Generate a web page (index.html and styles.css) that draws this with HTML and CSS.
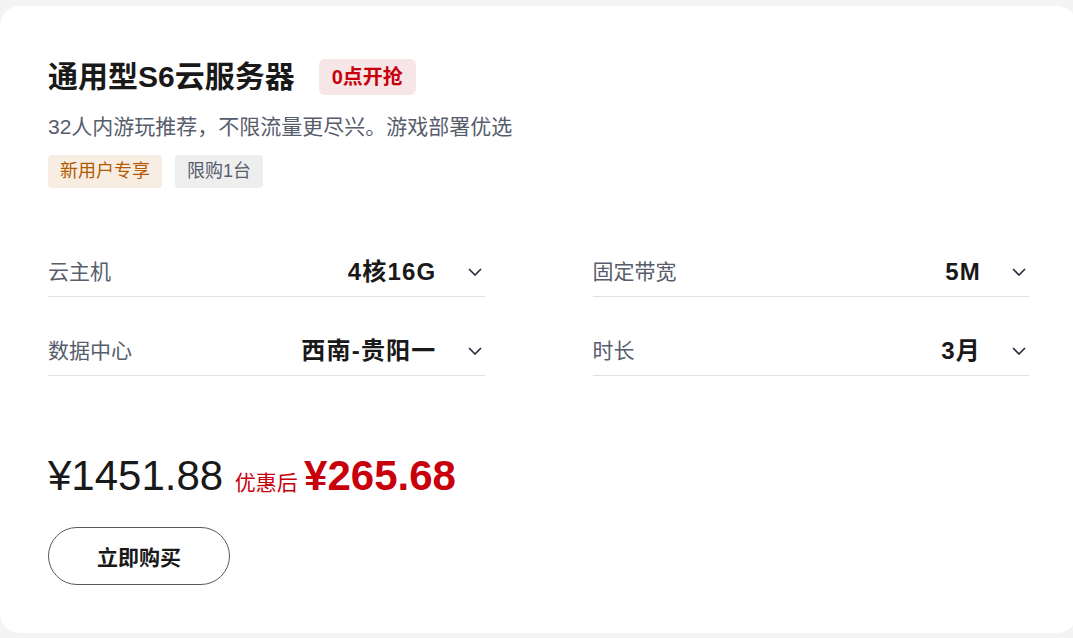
FILE: index.html
```html
<!DOCTYPE html>
<html lang="zh-CN">
<head>
<meta charset="utf-8">
<title>通用型S6云服务器</title>
<link rel="stylesheet" href="styles.css">
</head>
<body>
<div class="card">
  <div class="header">
    <h1 class="title">通用型S6云服务器</h1>
    <span class="badge">0点开抢</span>
  </div>
  <p class="subtitle">32人内游玩推荐，不限流量更尽兴。游戏部署优选</p>
  <div class="tags">
    <span class="tag tag-new">新用户专享</span>
    <span class="tag tag-limit">限购1台</span>
  </div>
  <div class="specs">
    <div class="spec">
      <span class="label">云主机</span>
      <span class="value">4核16G</span>
      <svg class="chev" width="14" height="8" viewBox="0 0 14 8"><path d="M1 1 L7 7 L13 1" fill="none" stroke="#252b3a" stroke-width="1.6"/></svg>
    </div>
    <div class="spec">
      <span class="label">固定带宽</span>
      <span class="value">5M</span>
      <svg class="chev" width="14" height="8" viewBox="0 0 14 8"><path d="M1 1 L7 7 L13 1" fill="none" stroke="#252b3a" stroke-width="1.6"/></svg>
    </div>
    <div class="spec">
      <span class="label">数据中心</span>
      <span class="value">西南-贵阳一</span>
      <svg class="chev" width="14" height="8" viewBox="0 0 14 8"><path d="M1 1 L7 7 L13 1" fill="none" stroke="#252b3a" stroke-width="1.6"/></svg>
    </div>
    <div class="spec">
      <span class="label">时长</span>
      <span class="value">3月</span>
      <svg class="chev" width="14" height="8" viewBox="0 0 14 8"><path d="M1 1 L7 7 L13 1" fill="none" stroke="#252b3a" stroke-width="1.6"/></svg>
    </div>
  </div>
  <div class="price">
    <span class="orig">¥1451.88</span>
    <span class="after">优惠后</span>
    <span class="now">¥265.68</span>
  </div>
  <button class="buy">立即购买</button>
</div>
</body>
</html>
```
FILE: styles.css
```css
html, body {
  margin: 0;
  padding: 0;
  background: #f4f4f4;
  overflow: hidden;
}
body {
  font-family: "Liberation Sans", "Noto Sans CJK SC", sans-serif;
  color: #191919;
  padding-top: 6px;
}
.card {
  box-sizing: border-box;
  width: 1077px;
  background: #fff;
  border-radius: 20px;
  padding: 52px 48px 48px 48px;
}
.header {
  display: flex;
  align-items: center;
  height: 38px;
}
.title {
  margin: 0;
  font-size: 30px;
  line-height: 38px;
  font-weight: bold;
  color: #191919;
}
.badge {
  margin-left: 24px;
  height: 36px;
  line-height: 36px;
  padding: 0 13px;
  border-radius: 6px;
  background: #f6e6e8;
  color: #c7000b;
  font-weight: bold;
  font-size: 20px;
}
.subtitle {
  margin: 16px 0 0 0;
  font-size: 21px;
  line-height: 30px;
  color: #575d6c;
}
.tags {
  display: flex;
  gap: 13px;
  margin-top: 13px;
}
.tag {
  height: 33px;
  line-height: 33px;
  padding: 0 12px;
  border-radius: 4px;
  font-size: 18px;
}
.tag-new {
  background: #f8ede3;
  color: #b35a00;
}
.tag-limit {
  background: #eeeeef;
  color: #575d6c;
}
.specs {
  display: grid;
  grid-template-columns: 1fr 1fr;
  column-gap: 108px;
  row-gap: 39px;
  margin-top: 69px;
}
.spec {
  display: flex;
  align-items: center;
  padding-bottom: 9px;
  border-bottom: 1px solid #dfe1e6;
}
.label {
  flex: 1;
  font-size: 21px;
  line-height: 30px;
  color: #575d6c;
}
.value {
  font-size: 24px;
  line-height: 30px;
  font-weight: bold;
  letter-spacing: 1.2px;
  color: #191919;
}
.chev {
  margin-left: 31px;
  margin-right: 3px;
}
.price {
  margin-top: 75px;
  height: 50px;
  line-height: 50px;
  white-space: nowrap;
}
.orig {
  font-size: 42px;
  color: #191919;
}
.after {
  font-size: 21px;
  color: #c7000b;
  margin-left: 7px;
}
.now {
  font-size: 42px;
  font-weight: bold;
  color: #c7000b;
  margin-left: 2px;
}
.buy {
  display: block;
  margin-top: 26px;
  width: 182px;
  height: 58px;
  border: 1px solid #595959;
  border-radius: 29px;
  background: #fff;
  font-family: "Liberation Sans", "Noto Sans CJK SC", sans-serif;
  font-size: 21px;
  font-weight: bold;
  color: #191919;
  padding: 0;
}
```
